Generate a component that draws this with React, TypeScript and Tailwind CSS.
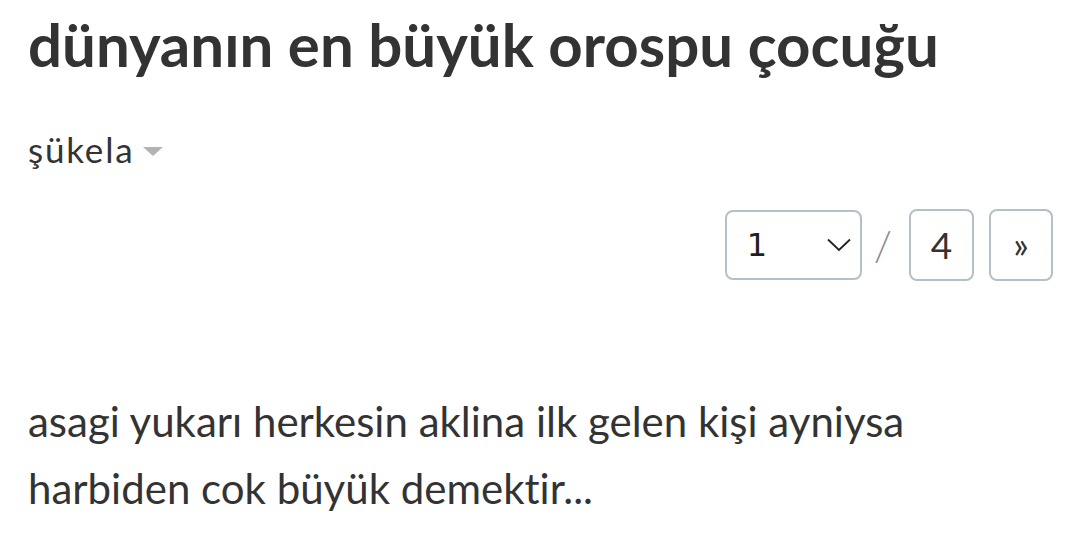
import React from "react";

export default function App() {
  return (
    <div
      className="w-[1080px] h-[546px] bg-white text-[#333333] px-[28px] pt-[11px] overflow-hidden [font-variant-ligatures:none]"
      style={{ fontFamily: "Lato, 'Noto Sans', sans-serif" }}
    >
      <h1 className="text-[60px] font-bold leading-[67px] whitespace-nowrap">
        dünyanın en büyük orospu çocuğu
      </h1>
      <div className="mt-[54px] flex items-center text-[35px] leading-[35px] tracking-[1.8px]">
        <span>şükela</span>
        <svg width="20" height="9" viewBox="0 0 20 9" className="ml-[9px] mt-[4px]">
          <polygon points="0,0 20,0 10,9" fill="#b3b3b3" />
        </svg>
      </div>
      <div className="mt-[42px] -mr-[1px] flex justify-end items-center">
        <div className="w-[137px] h-[70px] border-2 border-[#b4c0c7] rounded-[8px] flex items-center justify-between pl-[20px] pr-[9px]">
          <span
            className="text-[32px] text-[#1f1f1f]"
            style={{ fontFamily: "'DejaVu Sans', sans-serif" }}
          >
            1
          </span>
          <svg width="24" height="14" viewBox="0 0 24 14">
            <polyline points="1,1.5 12,12 23,1.5" fill="none" stroke="#222" strokeWidth="1.8" />
          </svg>
        </div>
        <span className="ml-[12px] mr-[17px] text-[42px] leading-[42px] text-[#8a8a8a] font-light">/</span>
        <div className="w-[65px] h-[72px] border-2 border-[#b4c0c7] rounded-[8px] flex items-center justify-center text-[37px] text-[#333]">
          4
        </div>
        <div className="ml-[15px] w-[64px] h-[72px] border-2 border-[#b4c0c7] rounded-[8px] flex items-center justify-center text-[36px] text-[#333] pb-[2px]">
          »
        </div>
      </div>
      <p className="mt-[107px] text-[42px] leading-[67px] w-[960px]">
        asagi yukarı herkesin aklina ilk gelen kişi ayniysa harbiden cok büyük demektir...
      </p>
    </div>
  );
}
